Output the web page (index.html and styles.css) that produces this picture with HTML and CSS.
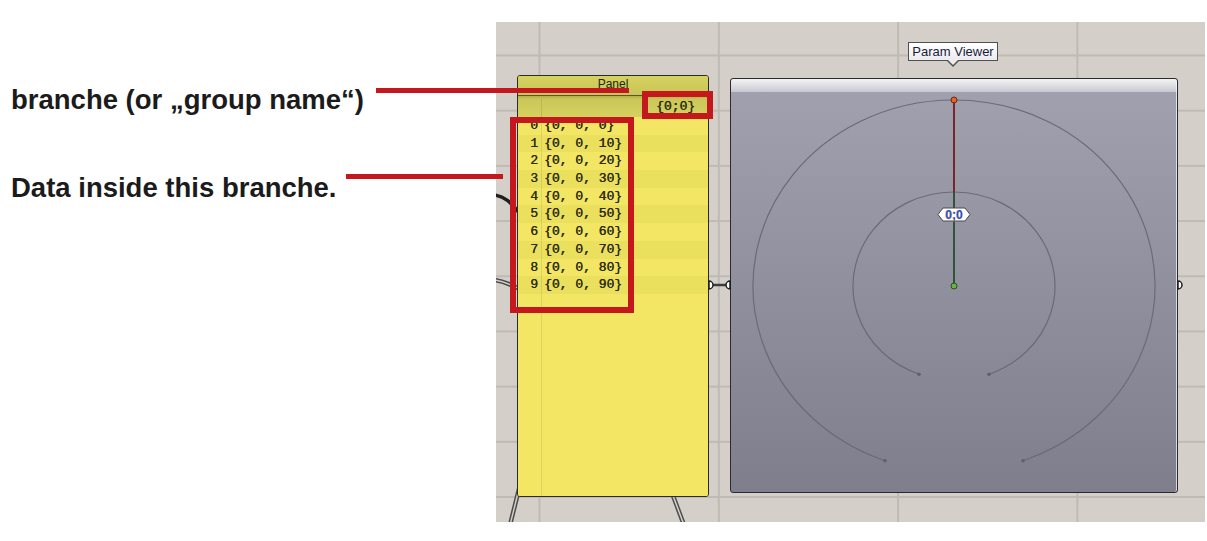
FILE: index.html
```html
<!DOCTYPE html>
<html lang="en">
<head>
<meta charset="utf-8">
<title>Panel and Param Viewer</title>
<link rel="stylesheet" href="styles.css">
</head>
<body>
<div class="page">
  <div class="notes">
    <p class="note">branche (or „group name“)</p>
    <p class="note note-data">Data inside this branche.</p>
  </div>

  <div class="canvas">
    <svg class="wires" width="709" height="500" viewBox="0 0 709 500">
      <path d="M -2 173 C 8 174, 15 180, 24 192" class="wire-dark"/>
      <path d="M -2 258 C 8 259, 15 263, 24 267" class="wire-outer"/>
      <path d="M -2 258 C 8 259, 15 263, 24 267" class="wire-inner"/>
      <path d="M 26 455 L 14 503" class="wire-outer"/>
      <path d="M 26 455 L 14 503" class="wire-inner"/>
      <path d="M 170 455 L 188 503" class="wire-outer"/>
      <path d="M 170 455 L 188 503" class="wire-inner"/>
      <path d="M 213 263 L 234 263" class="wire-link"/>
    </svg>

    <div class="panel">
      <div class="panel-head">Panel</div>
      <div class="panel-body">
        <div class="branch">{0;0}</div>
        <ol class="items">
          <li class="item"><span class="idx">0</span><span class="val">{0, 0, 0}</span></li>
          <li class="item"><span class="idx">1</span><span class="val">{0, 0, 10}</span></li>
          <li class="item"><span class="idx">2</span><span class="val">{0, 0, 20}</span></li>
          <li class="item"><span class="idx">3</span><span class="val">{0, 0, 30}</span></li>
          <li class="item"><span class="idx">4</span><span class="val">{0, 0, 40}</span></li>
          <li class="item"><span class="idx">5</span><span class="val">{0, 0, 50}</span></li>
          <li class="item"><span class="idx">6</span><span class="val">{0, 0, 60}</span></li>
          <li class="item"><span class="idx">7</span><span class="val">{0, 0, 70}</span></li>
          <li class="item"><span class="idx">8</span><span class="val">{0, 0, 80}</span></li>
          <li class="item"><span class="idx">9</span><span class="val">{0, 0, 90}</span></li>
        </ol>
      </div>
    </div>

    <div class="viewer"></div>

    <svg class="overlay" width="709" height="500" viewBox="0 0 709 500">
      <path d="M 389 438.7 A 201 186 0 1 1 527 438.7" class="arc"/>
      <path d="M 423 352.2 A 101 94 0 1 1 493 352.2" class="arc"/>
      <circle cx="389" cy="438.7" r="1.8" class="arc-end"/>
      <circle cx="527" cy="438.7" r="1.8" class="arc-end"/>
      <circle cx="423" cy="352.2" r="1.8" class="arc-end"/>
      <circle cx="493" cy="352.2" r="1.8" class="arc-end"/>
      <line x1="458" y1="78" x2="458" y2="170" class="stem-red"/>
      <line x1="458" y1="170" x2="458" y2="264" class="stem-green"/>
      <circle cx="458" cy="78" r="3" class="dot-red"/>
      <circle cx="458" cy="264" r="3" class="dot-green"/>
      <polygon points="442,192.5 447,186 469,186 474,192.5 469,199 447,199" class="tag"/>
      <text x="458" y="197" class="tag-text">0;0</text>
      <path d="M 213 259 A 4 4 0 0 1 213 267 Z" class="grip"/>
      <path d="M 234 259 A 4 4 0 0 0 234 267 Z" class="grip"/>
      <path d="M 682 259 A 4 4 0 0 1 682 267 Z" class="grip"/>
    </svg>

    <div class="tooltip">Param Viewer</div>
  </div>

  <div class="mark mark-line mark-line-1"></div>
  <div class="mark mark-line mark-line-2"></div>
  <div class="mark mark-box mark-box-1"></div>
  <div class="mark mark-box mark-box-2"></div>
</div>
</body>
</html>
```

FILE: styles.css
```css
html, body {
  margin: 0;
  padding: 0;
  background: #ffffff;
}

.page {
  position: relative;
  width: 1207px;
  height: 541px;
  display: flex;
  align-items: flex-start;
  overflow: hidden;
}

/* ---------- annotations ---------- */
.notes {
  flex: none;
  width: 496px;
  box-sizing: border-box;
  padding: 84px 0 0 11px;
}

.note {
  margin: 0;
  font: bold 27.5px/32px "Liberation Sans", Arial, sans-serif;
  color: #1b1b1b;
  white-space: nowrap;
}

.note-data {
  margin-top: 56px;
}

/* ---------- canvas ---------- */
.canvas {
  position: relative;
  flex: none;
  width: 709px;
  height: 500px;
  margin-top: 22px;
  overflow: hidden;
  background-color: #d4d0c9;
  background-image:
    linear-gradient(to right, #bfbbb4 0, #bfbbb4 1.5px, transparent 1.5px),
    linear-gradient(to bottom, #bfbbb4 0, #bfbbb4 1.5px, transparent 1.5px);
  background-size: 179.3px 100%, 100% 55.2px;
  background-position: 42.5px 0, 0 32.5px;
}

.wires,
.overlay {
  position: absolute;
  left: 0;
  top: 0;
  pointer-events: none;
}

.wire-dark {
  fill: none;
  stroke: #1f1f1f;
  stroke-width: 3.5;
}

.wire-outer {
  fill: none;
  stroke: #4c4c4c;
  stroke-width: 4.5;
}

.wire-inner {
  fill: none;
  stroke: #d2d0cc;
  stroke-width: 1.5;
}

.wire-link {
  stroke: #3c3c3c;
  stroke-width: 2.5;
}

/* ---------- panel ---------- */
.panel {
  position: absolute;
  left: 21px;
  top: 53px;
  width: 192px;
  height: 422px;
  box-sizing: border-box;
  border: 1px solid #2b2b2b;
  border-radius: 3px;
  overflow: hidden;
  display: flex;
  flex-direction: column;
  background: #f2e664;
}

.panel-head {
  flex: none;
  height: 19px;
  border-bottom: 1px solid #5a5829;
  background: linear-gradient(#d6d260, #c9c556);
  font: 12px/17px "Liberation Sans", Arial, sans-serif;
  color: #23220f;
  text-align: center;
}

.panel-body {
  flex: 1;
  background:
    linear-gradient(to right, transparent 23px, #dcd35e 23px, #dcd35e 24px, transparent 24px),
    #f2e664;
}

.branch {
  height: 21px;
  box-sizing: border-box;
  padding-right: 13px;
  text-align: right;
  font: 13px/21px "Liberation Mono", "Courier New", monospace;
  color: #2e2d12;
  text-shadow: 0.4px 0 0 #2e2d12;
  background:
    linear-gradient(to right, transparent 23px, #bdb850 23px, #bdb850 24px, transparent 24px),
    linear-gradient(#b2ae49, #cac658 3px, #d6d25f);
}

.items {
  list-style: none;
  margin: 0;
  padding: 0;
}

.item {
  display: flex;
  height: 17.7px;
  font: 13px/17.7px "Liberation Mono", "Courier New", monospace;
  color: #2c2c12;
  text-shadow: 0.4px 0 0 #2c2c12;
}

.item:nth-child(even) {
  background: rgba(120, 110, 0, 0.05);
}

.idx {
  flex: none;
  width: 23px;
  box-sizing: border-box;
  padding-right: 3px;
  text-align: right;
}

.val {
  padding-left: 3px;
  white-space: pre;
}

/* ---------- param viewer ---------- */
.viewer {
  position: absolute;
  left: 234px;
  top: 56px;
  width: 448px;
  height: 415px;
  box-sizing: border-box;
  border: 1px solid #2a2a2e;
  border-radius: 3px;
  background: linear-gradient(to bottom,
    #f4f4f6 0,
    #c7c7d0 13px,
    #a1a0af 13px,
    #7e7e8c 100%);
  box-shadow: inset -1px 0 0 rgba(255, 255, 255, 0.7);
}

.arc {
  fill: none;
  stroke: #6a6a7b;
  stroke-width: 1.2;
}

.arc-end {
  fill: #5f5f6e;
}

.stem-red {
  stroke: #7a2529;
  stroke-width: 2;
}

.stem-green {
  stroke: #2d5634;
  stroke-width: 2;
}

.dot-red {
  fill: #e2652a;
  stroke: #6e2414;
  stroke-width: 1;
}

.dot-green {
  fill: #69b43c;
  stroke: #2a5220;
  stroke-width: 1;
}

.tag {
  fill: #ffffff;
  stroke: #4a4a4a;
  stroke-width: 1;
}

.tag-text {
  font: bold 12px "Liberation Sans", Arial, sans-serif;
  text-anchor: middle;
  fill: #1f55d0;
  stroke: #f2a44a;
  stroke-width: 0.6;
  paint-order: stroke;
}

.grip {
  fill: #ffffff;
  stroke: #1e1e1e;
  stroke-width: 1.5;
}

/* ---------- tooltip ---------- */
.tooltip {
  position: absolute;
  left: 412px;
  top: 20px;
  width: 90px;
  height: 19px;
  box-sizing: border-box;
  border: 1px solid #505050;
  background: linear-gradient(#ffffff, #ebebf0);
  font: 13px/17px "Liberation Sans", Arial, sans-serif;
  color: #1b1b3a;
  text-align: center;
  white-space: nowrap;
}

.tooltip::before,
.tooltip::after {
  content: "";
  position: absolute;
  left: 50%;
  width: 0;
  height: 0;
  border-style: solid;
  border-color: transparent;
  border-bottom-width: 0;
}

.tooltip::before {
  top: calc(100% + 1px);
  margin-left: -6px;
  border-width: 6px 6px 0 6px;
  border-top-color: #505050;
}

.tooltip::after {
  top: 100%;
  margin-left: -5px;
  border-width: 5px 5px 0 5px;
  border-top-color: #ebebf0;
}

/* ---------- red markers ---------- */
.mark {
  position: absolute;
  box-sizing: border-box;
}

.mark-line {
  height: 5px;
  background: #c5181e;
}

.mark-line-1 {
  left: 376px;
  top: 88px;
  width: 253px;
}

.mark-line-2 {
  left: 346px;
  top: 174px;
  width: 157px;
}

.mark-box {
  border: 6px solid #c5181e;
}

.mark-box-1 {
  left: 642px;
  top: 91px;
  width: 71px;
  height: 28px;
}

.mark-box-2 {
  left: 510px;
  top: 117px;
  width: 124px;
  height: 196px;
}
```
